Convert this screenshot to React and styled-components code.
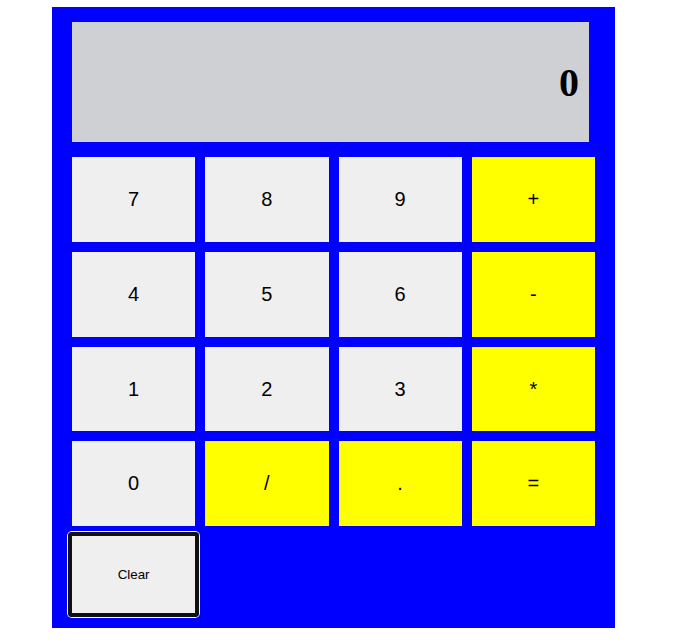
import React from "react";
import styled, { createGlobalStyle } from "styled-components";

const Global = createGlobalStyle`
  html, body { margin: 0; padding: 0; background: #fff; }
  body { font-family: "Liberation Sans", Arial, sans-serif; }
`;

const Calculator = styled.div`
  box-sizing: border-box;
  width: 563px;
  height: 621px;
  margin: 7px 0 0 52px;
  padding: 15px 20px;
  background: #0000ff;
  display: flex;
  flex-direction: column;
  gap: 15px;
`;

const Display = styled.div`
  box-sizing: border-box;
  width: 517px;
  height: 120px;
  flex: none;
  background: #cfd0d4;
  display: flex;
  align-items: center;
  justify-content: flex-end;
  padding-right: 10px;
  font-family: "Liberation Serif", "Times New Roman", serif;
  font-weight: bold;
  font-size: 40px;
  color: #000;
`;

const Keys = styled.div`
  display: grid;
  grid-template-columns: repeat(4, 1fr);
  grid-template-rows: 85px 85px 84px 85px 77px;
  gap: 10px;
`;

const Key = styled.button`
  position: relative;
  border: none;
  margin: 0;
  padding: 0;
  background: ${(p) => (p.$op ? "#ffff00" : "#efefef")};
  color: #000;
  font-family: "Liberation Sans", Arial, sans-serif;
  font-size: ${(p) => (p.$small ? "13.33px" : "20px")};
  cursor: pointer;
`;

const FocusRing = styled.span`
  position: absolute;
  inset: -4px;
  border: 4px solid #101010;
  border-radius: 4px;
  box-shadow: 0 0 0 1px #fff;
  pointer-events: none;
`;

const keys = [
  ["7"], ["8"], ["9"], ["+", true],
  ["4"], ["5"], ["6"], ["-", true],
  ["1"], ["2"], ["3"], ["*", true],
  ["0"], ["/", true], [".", true], ["=", true],
];

export default function App() {
  return (
    <>
      <Global />
      <Calculator>
        <Display>0</Display>
        <Keys>
          {keys.map(([label, op]) => (
            <Key key={label} $op={op}>{label}</Key>
          ))}
          <Key $small>
            Clear
            <FocusRing />
          </Key>
        </Keys>
      </Calculator>
    </>
  );
}
